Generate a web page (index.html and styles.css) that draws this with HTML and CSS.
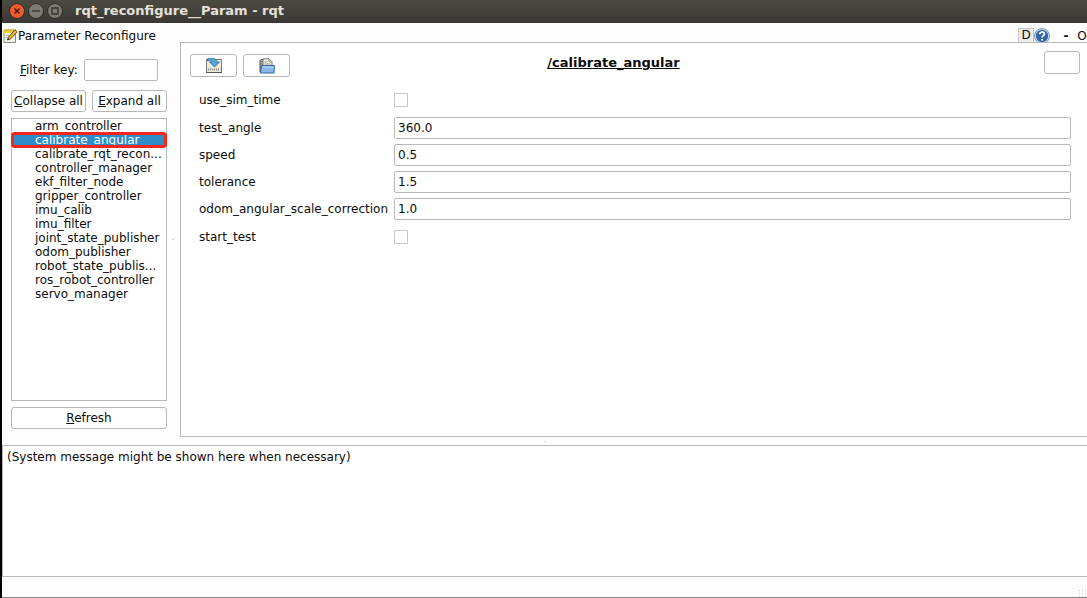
FILE: index.html
```html
<!DOCTYPE html>
<html lang="en">
<head>
<meta charset="utf-8">
<title>rqt_reconfigure__Param - rqt</title>
<link rel="stylesheet" href="styles.css">
</head>
<body>
<div class="window">
  <header class="titlebar">
    <button class="win-btn win-close" aria-label="Close window"><svg viewBox="0 0 16 16"><circle cx="8" cy="8" r="7.5" fill="#ee5a30" stroke="#2f2c27"/><path d="M5.500 5.500l5 5m0-5l-5 5" stroke="#4b1e10" stroke-width="1.500"/></svg></button>
    <button class="win-btn" aria-label="Minimize window"><svg viewBox="0 0 16 16"><circle cx="8" cy="8" r="7.5" fill="#7d7a72" stroke="#2f2c27"/><path d="M4 8h8" stroke="#35332e" stroke-width="1.300"/></svg></button>
    <button class="win-btn" aria-label="Maximize window"><svg viewBox="0 0 16 16"><circle cx="8" cy="8" r="7.5" fill="#7d7a72" stroke="#2f2c27"/><path d="M5 5h6v6H5z" fill="none" stroke="#35332e" stroke-width="1.300"/></svg></button>
    <h1 class="win-title">rqt_reconfigure__Param - rqt</h1>
  </header>

  <div class="dockbar">
    <svg class="note" viewBox="0 0 15 15"><path d="M1 2.500h11.500v12H1z" fill="#f3f3ec" stroke="#8c8c84"/><path d="M.8 1.500h12v3.500H.8z" fill="#ecd43c"/><path d="M2 1v2M4 1v2M6 1v2M8 1v2M10 1v2" stroke="#a38b25" stroke-width=".7"/><path d="M3 7.500h4M3 9.500h3" stroke="#b7b7b0" stroke-width=".8"/><path d="M4.500 12l1-3L12 1.800l2.300 2L7.500 11z" fill="#efb42e" stroke="#594719" stroke-width=".9"/><path d="M4.500 12l.6-1.700 1.300 1z" fill="#222"/></svg>
    <span class="dock-title">Parameter Reconfigure</span>
    <button class="dock-d">D</button>
    <button class="dock-help" aria-label="Help"><svg viewBox="0 0 16 16"><circle cx="8" cy="8" r="7.500" fill="#e8eef7" stroke="#6f8fbd"/><circle cx="8" cy="8" r="6.200" fill="#3465a4"/><path d="M5.700 6.300C5.700 3.200 10.500 3.300 10.400 6c0 1.700-2.300 1.700-2.300 3.500" fill="none" stroke="#fff" stroke-width="1.700"/><circle cx="8.100" cy="11.700" r="1" fill="#fff"/></svg></button>
    <button class="dock-min" aria-label="Minimize panel">-</button>
    <button class="dock-o" aria-label="Undock panel">O</button>
  </div>

  <main class="workspace">
    <aside class="sidebar">
      <div class="filter">
        <label for="filter"><u>F</u>ilter key:</label>
        <input id="filter" class="field" type="text">
      </div>
      <div class="tree-actions">
        <button class="btn"><u>C</u>ollapse all</button>
        <button class="btn"><u>E</u>xpand all</button>
      </div>
      <ul class="tree">
        <li>arm_controller</li>
        <li class="selected">calibrate_angular</li>
        <li>calibrate_rqt_recon...</li>
        <li>controller_manager</li>
        <li>ekf_filter_node</li>
        <li>gripper_controller</li>
        <li>imu_calib</li>
        <li>imu_filter</li>
        <li>joint_state_publisher</li>
        <li>odom_publisher</li>
        <li>robot_state_publis...</li>
        <li>ros_robot_controller</li>
        <li>servo_manager</li>
      </ul>
      <button class="btn"><u>R</u>efresh</button>
    </aside>
    <div class="split-v"></div>
    <section class="panel">
      <div class="panel-head">
        <button class="btn tool" aria-label="Save parameters"><svg viewBox="0 0 16 16"><path d="M.5 1.500h15v13H.5z" fill="#f1efdc" stroke="#77776f"/><path d="M1 9.500h14v4H1z" fill="#e4e4e0"/><path d="M2 11.500h12" stroke="#8c8c86" stroke-width="2" stroke-dasharray="1 1"/><path d="M0 14.500h16" stroke="#55564f"/><path d="M1.500.8C6-.6 10.800.3 11 4h2.500L8.500 9 3.500 4h3C6.300 2.800 4 2.300 1.500 2.800z" fill="#5aa5dc" stroke="#1f6599" stroke-width=".8"/></svg></button>
        <button class="btn tool" aria-label="Load parameters"><svg viewBox="0 0 16 16"><path d="M1 14.500V2.500L2 1.500h3l1 1v12z" fill="#9a9fa3" stroke="#4c5054"/><path d="M4 10V.8h6l3 3V10z" fill="#f5f5e8" stroke="#77776f"/><path d="M10 1v3h3M5.500 4h3M5.500 6h6" fill="none" stroke="#999990"/><path d="M2.500 7.500h13l-.5 7.500H1.500z" fill="#8db8f0" stroke="#3465a4"/><path d="M3.500 9h11" stroke="#c0d8f8"/></svg></button>
        <h2 class="panel-title">/calibrate_angular</h2>
        <button class="btn close-node" aria-label="Close node"></button>
      </div>
      <form class="params">
        <label class="tall" for="sim">use_sim_time</label><input id="sim" class="check" type="checkbox">
        <label for="angle">test_angle</label><input id="angle" class="field" type="text" value="360.0">
        <label for="speed">speed</label><input id="speed" class="field" type="text" value="0.5">
        <label for="tol">tolerance</label><input id="tol" class="field" type="text" value="1.5">
        <label for="odom">odom_angular_scale_correction</label><input id="odom" class="field" type="text" value="1.0">
        <label class="tall" for="start">start_test</label><input id="start" class="check" type="checkbox">
      </form>
    </section>
  </main>
  <div class="split-h"></div>
  <section class="messages">(System message might be shown here when necessary)</section>
  <footer class="statusbar"><span class="grip"></span></footer>
</div>
</body>
</html>
```

FILE: styles.css
```css
* { box-sizing: border-box; }
body {
  margin: 0;
  background: #000;
  color: #0c0c0c;
  font: 12px/16px "DejaVu Sans", sans-serif;
}
button, input { font: inherit; color: inherit; margin: 0; padding: 0; }
button { white-space: nowrap; }
svg { display: block; }
.window {
  display: flex;
  flex-direction: column;
  height: 100vh;
  margin-left: 2px;
  background: #fdfdfd;
  border-bottom: 1px solid #858585;
  overflow: hidden;
}
.titlebar {
  display: flex;
  align-items: center;
  flex: none;
  gap: 3px;
  height: 23px;
  padding: 0 7px 2px;
  background: linear-gradient(#4b4a42, #3a3833);
}
.win-btn { width: 16px; height: 16px; border: 0; background: none; }
.win-title {
  margin: 0 0 0 9px;
  color: #e5e1d8;
  font-size: 13px;
  line-height: 20px;
}
.dockbar {
  display: flex;
  align-items: center;
  flex: none;
  height: 19px;
  padding-top: 6px;
}
.note { width: 15px; height: 15px; margin-left: 1px; }
.dock-title { flex: 1; }
.dockbar button { border: 0; background: none; }
.dockbar .dock-d {
  width: 16px;
  height: 15px;
  background: #ececec;
  border: 1px solid #c4c4c4;
  line-height: 13px;
}
.dock-help svg { width: 16px; height: 16px; }
.dockbar .dock-min { width: 27px; padding-left: 5px; font-weight: bold; }
.dock-o { width: 10px; }
.workspace { display: flex; flex: 1; min-height: 0; }
.sidebar {
  display: flex;
  flex-direction: column;
  gap: 6px;
  width: 165px;
  padding: 17px 0 8px 9px;
}
.filter { display: flex; align-items: center; gap: 6px; padding: 0 9px 3px; }
.filter label { white-space: nowrap; }
.filter .field { flex: 1; min-width: 0; }
.field {
  width: 100%;
  height: 22px;
  padding: 0 3px;
  background: #fff;
  border: 1px solid #b8b8b8;
  border-radius: 2px;
}
.btn {
  height: 22px;
  border: 1px solid #b8b8b8;
  border-radius: 3px;
  background: #fff;
}
.sidebar .btn { flex: none; }
.tree-actions { display: grid; grid-template-columns: 1fr 1fr; gap: 6px; }
.tree {
  flex: 1;
  margin: 0;
  padding: 0;
  background: #fff;
  border: 1px solid #b8b8b8;
  list-style: none;
}
.tree li {
  height: 14px;
  padding-left: 23px;
  line-height: 14px;
  white-space: nowrap;
}
.tree .selected {
  background: #308cc6;
  color: #fff;
  outline: 3px solid #f52518;
  outline-offset: -2px;
  border-radius: 3px;
}
.split-v {
  flex: none;
  width: 13px;
  background: radial-gradient(#ddd 1px, transparent 1px) center / 3px 3px no-repeat;
}
.panel {
  flex: 1;
  min-width: 0;
  padding: 8px 7px 0 9px;
  background: #fff;
  border: 1px solid #b8b8b8;
  border-right: 0;
}
.panel-head { display: flex; align-items: flex-start; gap: 6px; }
.tool { display: grid; place-items: center; width: 47px; height: 23px; margin-top: 3px; }
.tool svg { width: 16px; height: 16px; }
.panel-title {
  flex: 1;
  margin: 0;
  padding-right: 107px;
  font-size: 13px;
  line-height: 24px;
  text-align: center;
  text-decoration: underline;
}
.close-node { width: 36px; height: 23px; }
.params {
  display: grid;
  grid-template-columns: max-content 1fr;
  gap: 5px 6px;
  align-items: center;
  padding: 11px 9px 0;
}
.tall { line-height: 24px; }
.check {
  appearance: none;
  width: 14px;
  height: 14px;
  background: #fff;
  border: 1px solid #c9c9c9;
}
.split-h {
  flex: none;
  height: 8px;
  background: radial-gradient(#ddd 1px, transparent 1px) center / 15px 3px no-repeat;
}
.messages {
  flex: none;
  height: 132px;
  padding: 3px 4px;
  background: #fff;
  border: 1px solid #b8b8b8;
  border-right: 0;
}
.statusbar {
  display: flex;
  justify-content: flex-end;
  align-items: flex-end;
  flex: none;
  height: 20px;
}
.grip {
  width: 9px;
  height: 8px;
  background: radial-gradient(#ccc 1px, transparent 1px) 0 0 / 3px 3px;
}
```
